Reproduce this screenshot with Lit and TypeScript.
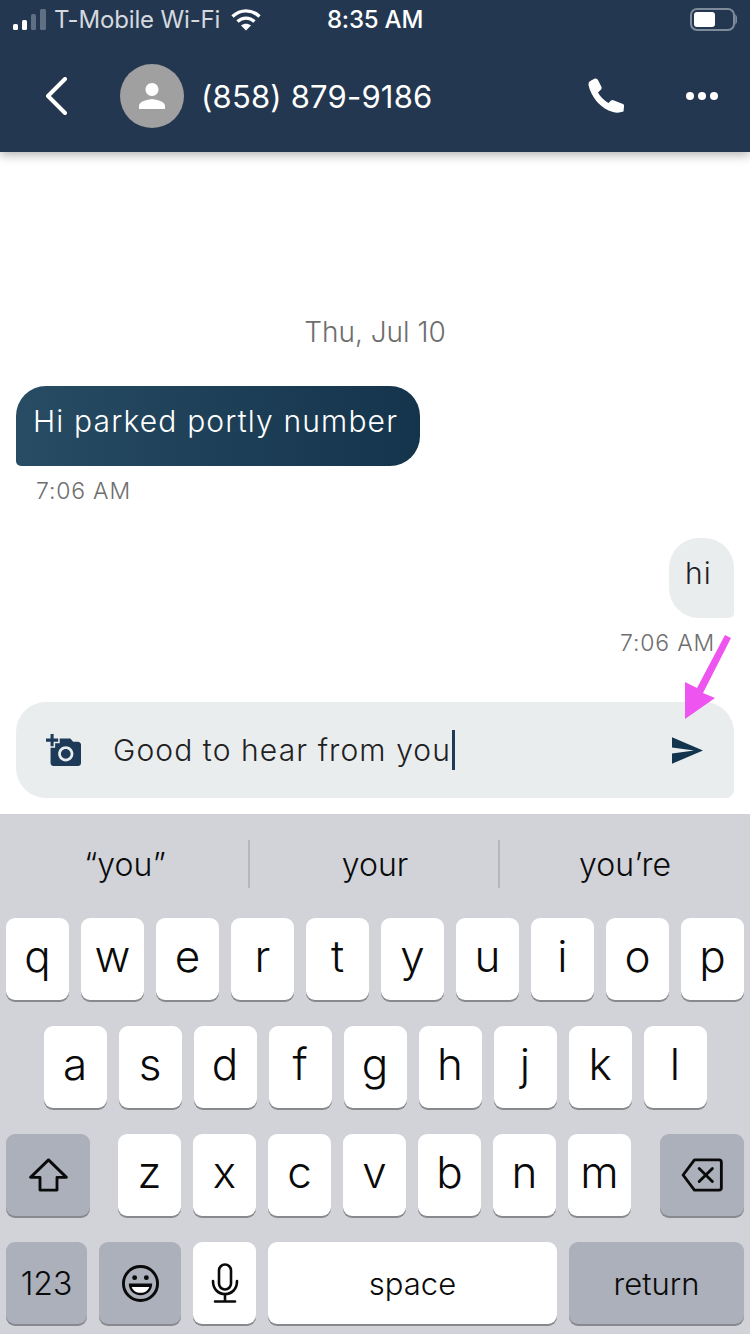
// Chat thread screen with an iOS keyboard below the message composer
import { css, html, LitElement, svg } from "lit";
import { customElement } from "lit/decorators.js";

const ROW_ONE = ["q", "w", "e", "r", "t", "y", "u", "i", "o", "p"];
const ROW_TWO = ["a", "s", "d", "f", "g", "h", "j", "k", "l"];
const ROW_THREE = ["z", "x", "c", "v", "b", "n", "m"];
const SUGGESTIONS = ["“you”", "your", "you’re"];

const PERSON = svg`<path d="M12 12c2.21 0 4-1.79 4-4s-1.79-4-4-4-4 1.79-4 4 1.79 4 4 4zm0 2c-2.67 0-8 1.34-8 4v2h16v-2c0-2.66-5.33-4-8-4z" fill="#fff"/>`;
const CAMERA = svg`<path d="M3 4V1h2v3h3v2H5v3H3V6H0V4h3zm3 6V7h3V4h7l1.83 2H21c1.1 0 2 .9 2 2v12c0 1.1-.9 2-2 2H5c-1.1 0-2-.9-2-2V10h3zm7 9c2.76 0 5-2.24 5-5s-2.24-5-5-5-5 2.24-5 5 2.24 5 5 5zm-3.2-5c0 1.77 1.43 3.2 3.2 3.2s3.2-1.43 3.2-3.2-1.43-3.2-3.2-3.2-3.2 1.43-3.2 3.2z" fill="#1d3a58"/>`;

@customElement("app-root")
export class AppRoot extends LitElement {
  static styles = css`
    :host {
      display: block;
      width: 750px;
      height: 1334px;
      font-family: Inter, "Liberation Sans", sans-serif;
    }
    svg {
      display: block;
    }
    .screen {
      position: relative;
      display: flex;
      flex-direction: column;
      width: 750px;
      height: 1334px;
      overflow: hidden;
      background: #fff;
    }

    /* top bar */
    .top {
      position: relative;
      z-index: 1;
      flex: none;
      height: 152px;
      background: #233750;
      color: #fff;
      box-shadow: 0 3px 10px rgba(0, 0, 0, 0.3);
    }
    .status {
      display: grid;
      grid-template-columns: 1fr auto 1fr;
      align-items: center;
      height: 40px;
      padding: 0 13px;
      font-size: 24px;
      line-height: 40px;
    }
    .carrier {
      display: flex;
      align-items: center;
      gap: 9px;
    }
    .carrier-name {
      margin-left: -1px;
      letter-spacing: -0.15px;
      color: #d5d9df;
    }
    .wifi {
      margin-left: 2px;
    }
    .clock {
      font-weight: 500;
      letter-spacing: -0.2px;
    }
    .battery {
      justify-self: end;
    }
    .nav {
      display: flex;
      align-items: center;
      height: 112px;
    }
    .back {
      margin-left: 45px;
    }
    .avatar {
      display: flex;
      align-items: center;
      justify-content: center;
      width: 64px;
      height: 64px;
      margin-left: 53px;
      border-radius: 50%;
      background: #a0a0a0;
    }
    .name {
      flex: 1;
      margin-left: 17px;
      font-size: 31px;
      letter-spacing: 0.2px;
    }
    .call {
      margin-right: 62px;
    }
    .more {
      display: flex;
      gap: 4px;
      margin-right: 32px;
    }
    .more span {
      width: 8px;
      height: 8px;
      border-radius: 50%;
      background: #fff;
    }

    /* message thread */
    .thread {
      flex: 1;
      display: flex;
      flex-direction: column;
      justify-content: flex-end;
      padding-bottom: 34px;
    }
    .date {
      margin-bottom: 34px;
      font-size: 28px;
      font-weight: 300;
      line-height: 40px;
      text-align: center;
      color: #6e6e6e;
    }
    .bubble {
      height: 80px;
      font-size: 30px;
      font-weight: 300;
      line-height: 70px;
      letter-spacing: 1.15px;
    }
    .incoming {
      align-self: flex-start;
      margin-left: 16px;
      padding: 0 22px 0 17px;
      border-radius: 30px 30px 30px 5px;
      background: linear-gradient(90deg, #274c63, #14344c);
      color: #fff;
    }
    .outgoing {
      align-self: flex-end;
      margin: 22px 16px 0 0;
      padding: 0 22px 0 16px;
      border-radius: 30px 30px 5px 30px;
      background: #eaedee;
      color: #1f2225;
    }
    .time {
      padding-top: 1px;
      font-size: 23px;
      font-weight: 300;
      line-height: 49px;
      letter-spacing: 0.8px;
      color: #6e6e6e;
    }
    .time.left {
      margin-left: 36px;
    }
    .time.right {
      margin-right: 35px;
      text-align: right;
    }

    /* composer */
    .composer {
      flex: none;
      display: flex;
      align-items: center;
      height: 96px;
      margin: 0 16px 16px;
      padding: 0 31px 0 30px;
      border-radius: 30px 30px 8px 30px;
      background: #eaedee;
    }
    .draft {
      flex: 1;
      display: flex;
      align-items: center;
      margin-left: 32px;
      font-size: 30px;
      font-weight: 300;
      letter-spacing: 1.1px;
      color: #1f2123;
    }
    .caret {
      width: 3px;
      height: 40px;
      margin-left: 1px;
      background: #1c3a5a;
    }

    /* keyboard */
    .keyboard {
      flex: none;
      height: 520px;
      padding: 0 6px;
      box-sizing: border-box;
      background: #d1d3d9;
      color: #0a0a0a;
    }
    .suggestions {
      display: grid;
      grid-template-columns: repeat(3, 1fr);
      align-items: center;
      height: 104px;
      margin: 0 -6px;
    }
    .suggestion {
      display: flex;
      align-items: center;
      justify-content: center;
      height: 48px;
      margin: 0 0 4px -2px;
      font-size: 32px;
      font-weight: 300;
      border-left: 2px solid #b4b6bc;
    }
    .suggestion:first-child {
      margin-left: 0;
      border-left: none;
    }
    .row {
      display: flex;
      justify-content: center;
      gap: 12px;
      margin-bottom: 26px;
    }
    .row.spread {
      justify-content: space-between;
    }
    .letters {
      display: flex;
      gap: 12px;
      margin-right: 1px;
    }
    .key {
      flex: none;
      display: flex;
      align-items: center;
      justify-content: center;
      width: 63px;
      height: 82px;
      padding-bottom: 6px;
      box-sizing: border-box;
      border-radius: 9px;
      background: #fff;
      box-shadow: 0 2px 0 #88898d;
      font-size: 44px;
      font-weight: 300;
    }
    .glyph {
      padding-bottom: 0;
    }
    .dark {
      background: #abb0bb;
    }
    .wide {
      width: 84px;
    }
    .label {
      padding-bottom: 0;
      font-size: 31px;
      font-weight: 300;
    }
    .numbers {
      width: 81px;
      font-size: 32px;
    }
    .emoji {
      width: 82px;
    }
    .space {
      flex: 1;
    }
    .return {
      width: 175px;
    }

    /* annotation */
    .arrow {
      position: absolute;
      left: 675px;
      top: 630px;
    }
  `;

  private renderKey(letter: string) {
    return html`<div class="key">${letter}</div>`;
  }

  private renderStatusBar() {
    return html`
      <div class="status">
        <div class="carrier">
          <svg width="33" height="22" viewBox="0 0 33 22">
            <rect x="0" y="15" width="5" height="6" rx="1.5" fill="#fff" />
            <rect x="9" y="11" width="5" height="10" rx="1.5" fill="#fff" />
            <rect x="18" y="5" width="5" height="16" rx="1.5" fill="#5f7085" />
            <rect x="27" y="0" width="6" height="21" rx="1.5" fill="#5f7085" />
          </svg>
          <span class="carrier-name">T-Mobile Wi-Fi</span>
          <svg class="wifi" width="30" height="22" viewBox="0 0 30 22" fill="none" stroke="#fff" stroke-width="3.4">
            <path d="M1.500 7.500c8-7.500 19-7.500 27 0" />
            <path d="M6.500 12.500c5-4.500 12-4.500 17 0" />
            <path d="M15 21.500l-5-5c3-2.400 7-2.400 10 0z" fill="#fff" stroke="none" />
          </svg>
        </div>
        <span class="clock">8:35 AM</span>
        <svg class="battery" width="47" height="24" viewBox="0 0 47 24" fill="none">
          <rect x="1" y="1" width="43" height="21" rx="6" stroke="#7d8b9b" stroke-width="2" />
          <rect x="4" y="4" width="21" height="15" rx="3" fill="#fff" />
          <path d="M46 8.500c1 1.500 1 4.500 0 6z" stroke="#7d8b9b" stroke-width="1.500" />
        </svg>
      </div>
    `;
  }

  private renderTopBar() {
    return html`
      <header class="top">
        ${this.renderStatusBar()}
        <div class="nav">
          <svg class="back" width="22" height="38" viewBox="0 0 22 38" fill="none" stroke="#fff" stroke-width="4" stroke-linecap="round" stroke-linejoin="round">
            <path d="M20 2L3 19l17 17" />
          </svg>
          <div class="avatar">
            <svg width="26" height="26" viewBox="4 4 16 16">${PERSON}</svg>
          </div>
          <div class="name">(858) 879-9186</div>
          <svg class="call" width="36" height="36" viewBox="0 0 36 36">
            <path d="M1 4Q3 2 7 .5 9 0 10 2l3.500 7q.5 2-1 3l-2.500 2.500q3 6 10.500 10.500l2.500-2.500q1.500-1 3 0l9 3.500q1.500 1 1 2.500l-.5 5q-5.500 2-10.500.5C13 31 3 19 .5 7 .5 5 1 4 1 4z" fill="#fff" />
          </svg>
          <div class="more"><span></span><span></span><span></span></div>
        </div>
      </header>
    `;
  }

  private renderThread() {
    return html`
      <main class="thread">
        <div class="date">Thu, Jul 10</div>
        <div class="bubble incoming">Hi parked portly number</div>
        <div class="time left">7:06 AM</div>
        <div class="bubble outgoing">hi</div>
        <div class="time right">7:06 AM</div>
      </main>
    `;
  }

  private renderComposer() {
    return html`
      <div class="composer">
        <svg width="35" height="32" viewBox="0 1 23 21">${CAMERA}</svg>
        <div class="draft">Good to hear from you<span class="caret"></span></div>
        <svg width="31" height="27" viewBox="2 3 21 18">
          <path d="M2.010 21L23 12 2.010 3 2 10l15 2-15 2z" fill="#12344d" />
        </svg>
      </div>
    `;
  }

  private renderKeyboard() {
    return html`
      <section class="keyboard">
        <div class="suggestions">
          ${SUGGESTIONS.map((word) => html`<div class="suggestion">${word}</div>`)}
        </div>
        <div class="row">${ROW_ONE.map((letter) => this.renderKey(letter))}</div>
        <div class="row">${ROW_TWO.map((letter) => this.renderKey(letter))}</div>
        <div class="row spread">
          <div class="key dark wide glyph">
            <svg width="41" height="34" viewBox="0 0 42 36" fill="none" stroke="#0a0a0a" stroke-width="3" stroke-linejoin="round">
              <path d="M21 2L2 20.500h10V34h18V20.500h10z" />
            </svg>
          </div>
          <div class="letters">${ROW_THREE.map((letter) => this.renderKey(letter))}</div>
          <div class="key dark wide glyph">
            <svg width="42" height="34" viewBox="0 0 44 36" fill="none" stroke="#0a0a0a" stroke-width="3" stroke-linejoin="round" stroke-linecap="round">
              <path d="M14 2h26c1.500 0 2.500 1 2.500 2.500v27c0 1.500-1 2.500-2.500 2.500H14L2 18z" />
              <path d="M19 11l14 14M33 11L19 25" />
            </svg>
          </div>
        </div>
        <div class="row">
          <div class="key dark numbers label">123</div>
          <div class="key dark emoji glyph">
            <svg width="39" height="39" viewBox="0 0 40 40">
              <circle cx="20" cy="20" r="17.500" fill="none" stroke="#0a0a0a" stroke-width="3" />
              <circle cx="14" cy="14" r="2.500" fill="#0a0a0a" />
              <circle cx="26" cy="14" r="2.500" fill="#0a0a0a" />
              <path d="M8 20h24c0 7-5 12-12 12S8 27 8 20z" fill="#0a0a0a" />
              <path d="M11 23.500h18c-1 3.500-4.500 6-9 6s-8-2.500-9-6z" fill="#fff" />
            </svg>
          </div>
          <div class="key glyph">
            <svg width="28" height="40" viewBox="0 0 28 40" fill="none" stroke="#0a0a0a" stroke-width="2.600" stroke-linecap="round">
              <rect x="8" y="1.500" width="12" height="25" rx="6" />
              <path d="M2 18c0 8 5 13 12 13s12-5 12-13M14 31v7M4 38.500h20" />
            </svg>
          </div>
          <div class="key space label">space</div>
          <div class="key dark return label">return</div>
        </div>
      </section>
    `;
  }

  render() {
    return html`
      <div class="screen">
        ${this.renderTopBar()} ${this.renderThread()} ${this.renderComposer()} ${this.renderKeyboard()}
        <svg class="arrow" width="62" height="94" viewBox="0 0 62 94" fill="#ee55f0">
          <path d="M50 5L56 8 28 63l12 5-30 21V52l12 6z" />
        </svg>
      </div>
    `;
  }
}
